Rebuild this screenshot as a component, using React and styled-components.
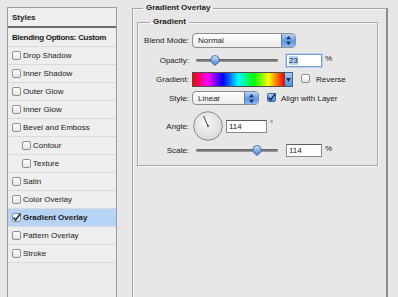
import React from 'react'
import styled, { createGlobalStyle } from 'styled-components'

const GlobalStyle = createGlobalStyle`
  body {
    margin: 0;
    background: #e7e7e7;
    font-family: "Liberation Sans", Arial, sans-serif;
    font-size: 8px;
    color: #1a1a1a;
  }
`

const Page = styled.div`
  display: flex;
  align-items: flex-start;
  width: 398px;
  height: 297px;
  overflow: hidden;
`

// left list of effects
const Sidebar = styled.div`
  box-sizing: border-box;
  width: 110px;
  height: 300px;
  margin: 7px 0 0 7px;
  border: 1px solid #9c9c9c;
  background: #ececec;
  flex-shrink: 0;
`

const Header = styled.div`
  display: flex;
  align-items: center;
  height: 18px;
  padding-left: 4px;
  font-weight: bold;
  background: #eeeeee;
  border-bottom: 2px solid #6e6e6e;
`

const Item = styled.div`
  display: flex;
  align-items: center;
  gap: 2px;
  height: ${p => (p.$tall ? 18 : 17)}px;
  padding-left: ${p => (p.$indent ? 14 : 4)}px;
  border-bottom: 1px solid #dadada;
  background: ${p => (p.$active ? '#b6d3f6' : '#eeeeee')};
  font-weight: ${p => (p.$bold ? 'bold' : 'normal')};
  letter-spacing: ${p => (p.$tight ? '-0.3px' : '0')};
`

const Box = styled.span`
  box-sizing: border-box;
  display: inline-flex;
  align-items: center;
  justify-content: center;
  width: 9px;
  height: 9px;
  border: 1px solid ${p => (p.$blue ? '#3c6aa8' : '#8f8f8f')};
  border-radius: 2px;
  background: ${p => (p.$blue ? 'linear-gradient(#a9cbf3, #4f8ddf)' : 'linear-gradient(#ffffff, #e4e4e4)')};
  flex-shrink: 0;
  margin-right: ${p => p.$mr || 0}px;
`

const Check = () => (
  <svg width="9" height="9" viewBox="0 0 9 9" style={{ overflow: 'visible' }}>
    <path d="M1.5 4.5 L3.6 7 L8.5 0.5" fill="none" stroke="#1b2f52" strokeWidth="1.6" />
  </svg>
)

const CheckBox = ({ checked, blue, mr }) => (
  <Box $blue={blue} $mr={mr}>{checked && <Check />}</Box>
)

// right side group boxes
const Group = styled.fieldset`
  box-sizing: border-box;
  margin: 2px 0 0 15px;
  width: 256px;
  height: 320px;
  padding: 2px 8px 0 4px;
  border: 1px solid #a6a6a6;
  border-right: 2px solid #8c8c8c;
  box-shadow: inset 1px 1px 0 #f7f7f7;
`

const Legend = styled.legend`
  margin-left: ${p => p.$ml}px;
  padding: 0 3px;
  font-weight: bold;
  line-height: 12px;
`

const Inner = styled.fieldset`
  margin: 0;
  padding: 5px 0 8px 0;
  border: 1px solid #a6a6a6;
  box-shadow: inset 1px 1px 0 #f7f7f7, 1px 1px 0 #f7f7f7;
`

const Row = styled.div`
  display: flex;
  align-items: center;
  height: ${p => p.$h}px;
  margin-top: ${p => p.$mt || 0}px;
`

const Label = styled.div`
  width: 51px;
  margin-right: 3px;
  text-align: right;
  flex-shrink: 0;
`

const Select = styled.div`
  box-sizing: border-box;
  display: flex;
  align-items: stretch;
  width: ${p => p.$w}px;
  height: ${p => p.$h}px;
  border: 1px solid #8d8d8d;
  border-radius: 4px;
  background: linear-gradient(#ffffff, #ececec);
  overflow: hidden;
`

const SelectText = styled.span`
  flex: 1;
  display: flex;
  align-items: center;
  padding-left: 5px;
`

const Stepper = styled.span`
  width: 13px;
  display: flex;
  align-items: center;
  justify-content: center;
  border-left: 1px solid #5b83bb;
  background: linear-gradient(#b4d2f6, #5e98e4 55%, #8ab8f0);
`

const Arrows = () => (
  <svg width="5" height="9" viewBox="0 0 5 9">
    <path d="M2.5 0 L5 3.3 H0 Z M2.5 9 L5 5.7 H0 Z" fill="#1b3156" />
  </svg>
)

const Dropdown = ({ value, w, h }) => (
  <Select $w={w} $h={h}>
    <SelectText>{value}</SelectText>
    <Stepper><Arrows /></Stepper>
  </Select>
)

const SliderWrap = styled.div`
  position: relative;
  width: 82px;
  height: 13px;
  margin-left: 4px;
  display: flex;
  align-items: center;
`

const Track = styled.div`
  width: 100%;
  height: 3px;
  border-radius: 2px;
  background: linear-gradient(#5a5a5a, #a0a0a0);
`

const Thumb = styled.svg`
  position: absolute;
  top: 1px;
  margin-left: -5px;
`

const Slider = ({ pct }) => (
  <SliderWrap>
    <Track />
    <Thumb width="10" height="11" viewBox="0 0 10 11" style={{ left: pct + '%' }}>
      <defs>
        <linearGradient id="tg" x1="0" y1="0" x2="0" y2="1">
          <stop offset="0" stopColor="#cfe3fb" />
          <stop offset="1" stopColor="#3d7ed8" />
        </linearGradient>
      </defs>
      <path d="M5 10.5 L1 7 V4 A4 3.5 0 0 1 9 4 V7 Z" fill="url(#tg)" stroke="#3a5f95" strokeWidth="0.8" />
    </Thumb>
  </SliderWrap>
)

const Input = styled.div`
  box-sizing: border-box;
  width: ${p => p.$w}px;
  height: 13px;
  margin-left: ${p => p.$ml}px;
  padding-left: 2px;
  display: flex;
  align-items: center;
  background: #fff;
  border: 1px solid ${p => (p.$focus ? '#7a9fcf' : '#8a8a8a')};
  border-top-color: ${p => (p.$focus ? '#7a9fcf' : '#5c5c5c')};
  box-shadow: ${p => (p.$focus ? '0 0 0 1px #b7d0f0' : 'none')};
`

const Selected = styled.span`
  background: #b4d3fb;
`

const Unit = styled.span`
  margin-left: 3px;
  position: relative;
  top: ${p => p.$top || -2}px;
`

const Swatch = styled.div`
  box-sizing: border-box;
  width: 93px;
  height: 15px;
  border: 1px solid #4e4e4e;
  background: linear-gradient(to right, #ff0000, #ff00ff 16%, #0000ff 33%, #00ffff 50%, #00ff00 67%, #ffff00 83%, #ff0000);
`

const SwatchButton = styled.div`
  box-sizing: border-box;
  width: 8px;
  height: 15px;
  display: flex;
  align-items: center;
  justify-content: center;
  border: 1px solid #3f5f90;
  border-left: none;
  background: linear-gradient(#a9cbf3, #4f8ddf);
`

const Text = styled.span`
  margin-left: ${p => p.$ml || 0}px;
`

const Dial = ({ angle }) => {
  const r = (angle * Math.PI) / 180
  const x = 15 + Math.cos(r) * 11
  const y = 15 - Math.sin(r) * 11
  return (
    <svg width="31" height="31" viewBox="0 0 31 31" style={{ marginLeft: 1 }}>
      <defs>
        <radialGradient id="dg" cx="0.45" cy="0.4" r="0.6">
          <stop offset="0" stopColor="#f8f8f8" />
          <stop offset="1" stopColor="#d9d9d9" />
        </radialGradient>
      </defs>
      <circle cx="15" cy="15" r="14.3" fill="url(#dg)" stroke="#8a8a8a" strokeWidth="1" />
      <line x1="15" y1="15" x2={x} y2={y} stroke="#444" strokeWidth="1" />
      <circle cx="15" cy="15" r="1" fill="#444" />
    </svg>
  )
}

const effects = [
  { name: 'Drop Shadow' },
  { name: 'Inner Shadow' },
  { name: 'Outer Glow' },
  { name: 'Inner Glow' },
  { name: 'Bevel and Emboss' },
  { name: 'Contour', indent: true },
  { name: 'Texture', indent: true },
  { name: 'Satin' },
  { name: 'Color Overlay' },
  { name: 'Gradient Overlay', active: true },
  { name: 'Pattern Overlay' },
  { name: 'Stroke' },
]

const App = () => (
  <Page>
    <GlobalStyle />
    <Sidebar>
      <Header>Styles</Header>
      <Item $tall $bold $tight>Blending Options: Custom</Item>
      {effects.map(e => (
        <Item key={e.name} $indent={e.indent} $active={e.active} $bold={e.active}>
          <CheckBox checked={e.active} />
          {e.name}
        </Item>
      ))}
    </Sidebar>

    <Group>
      <Legend $ml={6}>Gradient Overlay</Legend>
      <Inner>
        <Legend $ml={12}>Gradient</Legend>
        <Row $h={15}>
          <Label>Blend Mode:</Label>
          <Dropdown value="Normal" w={104} h={15} />
        </Row>
        <Row $h={13} $mt={6}>
          <Label>Opacity:</Label>
          <Slider pct={23} />
          <Input $w={36} $ml={8} $focus><Selected>23</Selected></Input>
          <Unit>%</Unit>
        </Row>
        <Row $h={15} $mt={5}>
          <Label>Gradient:</Label>
          <Swatch />
          <SwatchButton>
            <svg width="5" height="4" viewBox="0 0 5 4"><path d="M0 0 H5 L2.5 4 Z" fill="#1b3156" /></svg>
          </SwatchButton>
          <Text $ml={8}><CheckBox mr={6} /></Text>
          <Text>Reverse</Text>
        </Row>
        <Row $h={14} $mt={4}>
          <Label>Style:</Label>
          <Dropdown value="Linear" w={67} h={14} />
          <Text $ml={8}><CheckBox checked blue /></Text>
          <Text $ml={5}>Align with Layer</Text>
        </Row>
        <Row $h={31} $mt={6}>
          <Label>Angle:</Label>
          <Dial angle={114} />
          <Input $w={41} $ml={2}>114</Input>
          <Unit $top={-3}>°</Unit>
        </Row>
        <Row $h={13} $mt={2}>
          <Label>Scale:</Label>
          <Slider pct={74} />
          <Input $w={36} $ml={8}>114</Input>
          <Unit>%</Unit>
        </Row>
      </Inner>
    </Group>
  </Page>
)

export default App
